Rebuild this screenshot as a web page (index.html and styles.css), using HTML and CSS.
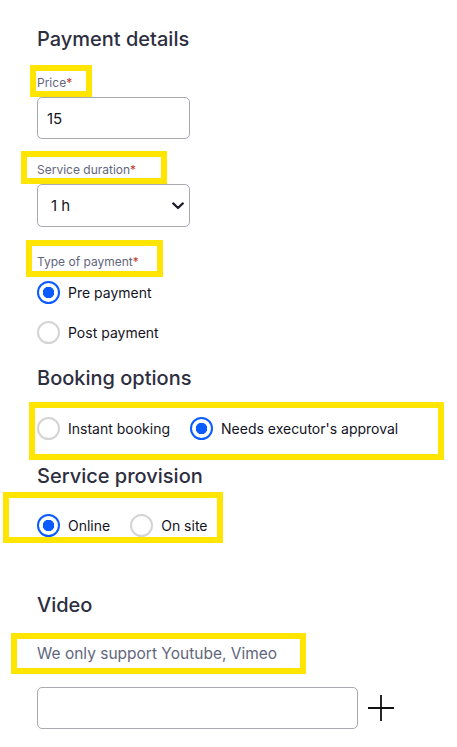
FILE: index.html
```html
<!DOCTYPE html>
<html lang="en">
<head>
  <meta charset="UTF-8" />
  <title>Service form</title>
  <link rel="stylesheet" href="styles.css">
</head>
<body>
  <div class="page">
    <h2 class="title">Payment details</h2>

    <div class="mark mark-price">
      <label class="label" for="price">Price<span class="req">*</span></label>
    </div>
    <input class="field field-short" id="price" type="text" value="15" />

    <div class="mark mark-duration">
      <label class="label" for="duration">Service duration<span class="req">*</span></label>
    </div>
    <div class="select-wrap">
      <select class="field field-short field-select" id="duration">
        <option>1 h</option>
        <option>2 h</option>
      </select>
      <svg class="chevron" width="12" height="8" viewBox="0 0 12 8">
        <path d="M1.2 1.4 L6 6 L10.8 1.4" fill="none" stroke="#1d1d2b" stroke-width="2.2" stroke-linecap="round" stroke-linejoin="round"/>
      </svg>
    </div>

    <div class="mark mark-type">
      <span class="label">Type of payment<span class="req">*</span></span>
    </div>
    <div class="radio-list">
      <label class="radio"><input type="radio" name="payment" checked /> Pre payment</label>
      <label class="radio"><input type="radio" name="payment" /> Post payment</label>
    </div>

    <h2 class="title title-booking">Booking options</h2>
    <div class="mark mark-booking">
      <div class="radio-row">
        <label class="radio"><input type="radio" name="booking" /> Instant booking</label>
        <label class="radio"><input type="radio" name="booking" checked /> Needs executor's approval</label>
      </div>
    </div>

    <h2 class="title title-provision">Service provision</h2>
    <div class="mark mark-provision">
      <div class="radio-row">
        <label class="radio"><input type="radio" name="provision" checked /> Online</label>
        <label class="radio"><input type="radio" name="provision" /> On site</label>
      </div>
    </div>

    <h2 class="title title-video">Video</h2>
    <div class="mark mark-video">
      <span class="hint">We only support Youtube, Vimeo</span>
    </div>
    <div class="video-row">
      <input class="field field-video" type="text" />
      <button class="add-btn" title="Add video">
        <svg width="26" height="26" viewBox="0 0 26 26">
          <path d="M13 0 V26 M0 13 H26" stroke="#111" stroke-width="1.8"/>
        </svg>
      </button>
    </div>
  </div>
</body>
</html>
```

FILE: styles.css
```css
body {
  margin: 0;
  background: #fff;
  font-family: Inter, "Liberation Sans", sans-serif;
  color: #14141f;
}

.page {
  padding: 27px 0 0 37px;
}

.title {
  margin: 0;
  font-size: 20px;
  line-height: 24px;
  font-weight: 500;
  color: #2d2e40;
}

.title-booking { margin-top: 22px; }
.title-provision { margin-top: 4px; }
.title-video { margin-top: 50px; }

/* yellow highlight boxes */
.mark {
  border: 6px solid #ffe500;
  box-sizing: border-box;
}

.mark-price {
  width: 62px;
  margin: 14px 0 0 -7px;
  padding: 4px 0 0 1px;
  height: 32px;
}

.mark-duration {
  width: 146px;
  margin: 12px 0 0 -16px;
  padding: 5px 0 0 10px;
  height: 33px;
}

.mark-type {
  width: 137px;
  margin: 13px 0 0 -11px;
  padding: 8px 0 0 5px;
  height: 37px;
}

.mark-booking {
  width: 415px;
  margin: 12px 0 0 -8px;
  padding: 9px 0 0 2px;
  height: 58px;
}

.mark-provision {
  width: 220px;
  margin: 4px 0 0 -34px;
  padding: 16px 0 0 28px;
  height: 51px;
}

.mark-video {
  width: 295px;
  margin: 16px 0 0 -26px;
  padding: 5px 0 0 20px;
  height: 41px;
}

.label {
  display: block;
  font-size: 12px;
  line-height: 16px;
  color: #62667c;
}

.req {
  color: #c0392b;
}

.hint {
  display: block;
  font-size: 15.5px;
  line-height: 20px;
  color: #62667c;
}

.field {
  display: block;
  box-sizing: border-box;
  height: 42px;
  border: 1px solid #a9a9b2;
  border-radius: 5px;
  background: #fff;
  font-family: inherit;
  font-size: 15px;
  color: #14141f;
  padding: 0 9px;
  outline: none;
}

.field-short {
  width: 153px;
}

.select-wrap {
  position: relative;
  width: 153px;
}

.field-select {
  height: 43px;
  appearance: none;
  padding-left: 13px;
}

.chevron {
  position: absolute;
  right: 6px;
  top: 18px;
  pointer-events: none;
}

.radio-list {
  display: flex;
  flex-direction: column;
  gap: 17px;
  margin-top: 4px;
}

.radio-row {
  display: flex;
  gap: 20px;
}

.radio {
  display: flex;
  align-items: center;
  gap: 8px;
  height: 23px;
  font-size: 14px;
  color: #14141f;
  cursor: pointer;
}

.radio input {
  appearance: none;
  margin: 0;
  width: 23px;
  height: 23px;
  box-sizing: border-box;
  border: 2px solid #d4d4d4;
  border-radius: 50%;
  background: #fff;
  flex-shrink: 0;
}

.radio input:checked {
  border: 2.5px solid #0b5cff;
  background: radial-gradient(circle, #0b5cff 0 5.5px, #fff 6px);
}

.video-row {
  display: flex;
  align-items: center;
  gap: 10px;
  margin-top: 13px;
}

.field-video {
  width: 321px;
}

.add-btn {
  border: none;
  background: none;
  padding: 0;
  width: 26px;
  height: 26px;
  cursor: pointer;
}

.add-btn svg {
  display: block;
}
```
